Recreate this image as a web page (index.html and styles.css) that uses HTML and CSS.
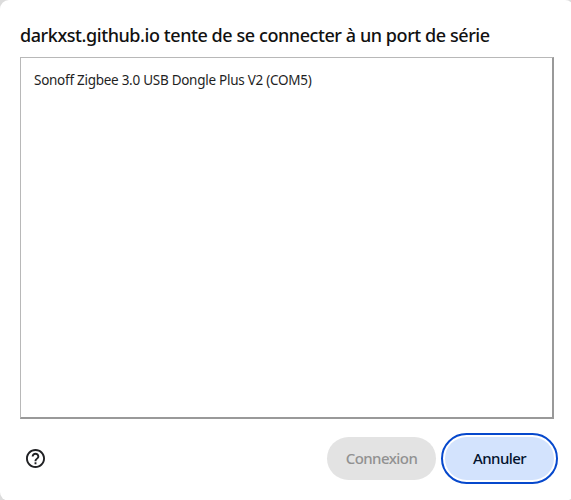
FILE: index.html
```
<!DOCTYPE html>
<html lang="fr">
<head>
    <meta charset="UTF-8">
    <meta name="viewport" content="width=device-width, initial-scale=1.0">
    <title>Port de série</title>
    <link rel="stylesheet" href="styles.css">
</head>
<body>
    <div class="dialog">
        <h1 class="dialog-title">darkxst.github.io tente de se connecter à un port de série</h1>
        <div class="port-list">
            <div class="port-item">Sonoff Zigbee 3.0 USB Dongle Plus V2 (COM5)</div>
        </div>
        <div class="dialog-footer">
            <a class="help-link" href="#" aria-label="Aide">
                <svg width="19" height="19" viewBox="2 2 20 20" fill="#202124">
                    <path d="M11 18h2v-2h-2v2zm1-16C6.48 2 2 6.48 2 12s4.480 10 10 10 10-4.480 10-10S17.520 2 12 2zm0 18c-4.410 0-8-3.590-8-8s3.590-8 8-8 8 3.590 8 8-3.590 8-8 8zm0-14c-2.210 0-4 1.790-4 4h2c0-1.100.9-2 2-2s2 .9 2 2c0 2-3 1.750-3 5h2c0-2.250 3-2.500 3-5 0-2.210-1.790-4-4-4z"/>
                </svg>
            </a>
            <div class="buttons">
                <button class="btn connect-btn" disabled>Connexion</button>
                <button class="btn cancel-btn">Annuler</button>
            </div>
        </div>
    </div>
</body>
</html>
```
FILE: styles.css
```
body {
    margin: 0;
    background: #dcdcdc;
    font-family: "Noto Sans", "Open Sans", sans-serif;
    color: #1f1f1f;
    overflow: hidden;
}

.dialog {
    box-sizing: border-box;
    width: 574px;
    height: 501px;
    padding: 20px 20px 0 20px;
    background: #fff;
    border-radius: 9px;
}

.dialog-title {
    height: 30px;
    margin: 0 0 7px;
    color: #111;
    font-size: 18px;
    font-weight: 500;
    line-height: 30px;
    letter-spacing: -0.43px;
    white-space: nowrap;
}

.port-list {
    box-sizing: border-box;
    width: 534px;
    height: 362px;
    padding: 11px 13px;
    border: 1px solid #b8b8b8;
    border-right: 2px solid #999;
    border-bottom: 2px solid #999;
}

.port-item {
    font-size: 13.5px;
    line-height: 22px;
    letter-spacing: -0.27px;
    white-space: nowrap;
}

.dialog-footer {
    display: flex;
    justify-content: space-between;
    align-items: center;
    height: 43px;
    margin-top: 18px;
}

.help-link {
    display: flex;
    padding: 0 0 1px 6px;
}

.buttons {
    display: flex;
    gap: 9px;
}

.btn {
    width: 109px;
    height: 43px;
    padding: 0 0 2px;
    border: none;
    border-radius: 22px;
    font-family: inherit;
    font-size: 15px;
    font-weight: 500;
    letter-spacing: -0.55px;
}

.connect-btn {
    background: #e3e3e3;
    color: #919191;
}

.cancel-btn {
    background: #d3e3fd;
    color: #03132e;
    outline: 2px solid #0648cc;
    outline-offset: 2px;
}
```
